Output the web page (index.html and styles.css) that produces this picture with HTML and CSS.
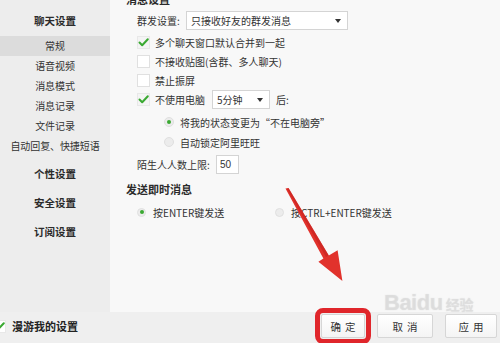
FILE: index.html
```html
<!DOCTYPE html>
<html lang="zh-CN">
<head>
<meta charset="utf-8">
<title>聊天设置</title>
<link rel="stylesheet" href="styles.css">
</head>
<body>
<div class="window">
  <div class="main-row">
    <nav class="sidebar">
      <div class="group-title">聊天设置</div>
      <ul class="items">
        <li class="item active">常规</li>
        <li class="item">语音视频</li>
        <li class="item">消息模式</li>
        <li class="item">消息记录</li>
        <li class="item">文件记录</li>
        <li class="item">自动回复、快捷短语</li>
      </ul>
      <div class="group-title">个性设置</div>
      <div class="group-title">安全设置</div>
      <div class="group-title">订阅设置</div>
    </nav>
    <section class="content">
      <h2 class="section-title cut">消息设置</h2>
      <div class="row field-row">
        <span class="label label-group">群发设置:</span>
        <div class="select select-wide"><span>只接收好友的群发消息</span><i class="caret"></i></div>
      </div>
      <div class="row check-row">
        <span class="checkbox checked"><svg viewBox="0 0 13 13"><path d="M2.5 6.5 L5.2 9.3 L10.8 3.2"/></svg></span>
        <span>多个聊天窗口默认合并到一起</span>
      </div>
      <div class="row check-row">
        <span class="checkbox"></span>
        <span>不接收贴图(含群、多人聊天)</span>
      </div>
      <div class="row check-row">
        <span class="checkbox"></span>
        <span>禁止振屏</span>
      </div>
      <div class="row check-row">
        <span class="checkbox checked"><svg viewBox="0 0 13 13"><path d="M2.5 6.5 L5.2 9.3 L10.8 3.2"/></svg></span>
        <span>不使用电脑</span>
        <div class="select select-small"><span>5分钟</span><i class="caret"></i></div>
        <span class="after">后:</span>
      </div>
      <div class="row radio-row sub">
        <span class="radio on"></span>
        <span>将我的状态变更为“不在电脑旁”</span>
      </div>
      <div class="row radio-row sub">
        <span class="radio"></span>
        <span>自动锁定阿里旺旺</span>
      </div>
      <div class="row field-row limit-row">
        <span class="label label-limit">陌生人人数上限:</span>
        <div class="input">50</div>
      </div>
      <h2 class="section-title send-title">发送即时消息</h2>
      <div class="row send-row">
        <div class="option first">
          <span class="radio small on"></span>
          <span>按ENTER键发送</span>
        </div>
        <div class="option">
          <span class="radio small"></span>
          <span>按CTRL+ENTER键发送</span>
        </div>
      </div>
    </section>
  </div>
  <footer class="footer">
    <div class="roam">
      <span class="checkbox checked"><svg viewBox="0 0 13 13"><path d="M2.5 6.5 L5.2 9.3 L10.8 3.2"/></svg></span>
      <span>漫游我的设置</span>
    </div>
    <div class="buttons">
      <button class="btn btn-ok highlight">确定</button>
      <button class="btn btn-cancel">取消</button>
      <button class="btn btn-apply">应用</button>
    </div>
  </footer>
  <div class="watermark"><span class="wm-latin">Baidu</span><span class="wm-cn">经验</span></div>
  <svg class="arrow" viewBox="0 0 500 343" width="500" height="343">
    <polygon points="285.5,188.5 288.5,188 328.8,255.4 337.6,250.2 342.4,281 318.4,261.8 323.4,258.6" fill="#e1322c"/>
    <polygon points="287,189 288.5,188 328.8,255.4 326,257" fill="#c5221f" opacity="0.6"/>
  </svg>
</div>
</body>
</html>
```
FILE: styles.css
```css
html, body {
  margin: 0;
  padding: 0;
}
body {
  width: 500px;
  height: 343px;
  overflow: hidden;
  font-family: "Noto Sans CJK SC", "Noto Sans", sans-serif;
  font-size: 10px;
  color: #333;
}
.window {
  position: relative;
  width: 500px;
  height: 343px;
  display: flex;
  flex-direction: column;
  background: #efefef;
  overflow: hidden;
}
.main-row {
  display: flex;
  height: 312px;
}
.sidebar {
  width: 110px;
  flex: none;
  background: #ededed;
  padding-top: 6px;
  box-sizing: border-box;
}
.group-title {
  line-height: 29px;
  text-align: center;
  font-weight: bold;
  font-size: 10.5px;
  color: #2b2b2b;
}
.items {
  list-style: none;
  margin: 1px 0 3px;
  padding: 0;
}
.item {
  height: 20px;
  line-height: 20px;
  text-align: center;
  white-space: nowrap;
  letter-spacing: -0.1px;
}
.item.active {
  background: #dcdcdc;
}
.content {
  flex: 1;
  background: #f8f8f8;
  padding-left: 16px;
  overflow: hidden;
}
.section-title {
  margin: 0;
  font-size: 11px;
  line-height: 16px;
  font-weight: bold;
  color: #2b2b2b;
}
.section-title.cut {
  margin-top: -9px;
}
.row {
  display: flex;
  align-items: center;
  padding-left: 11px;
  white-space: nowrap;
}
.field-row {
  margin-top: 4px;
  height: 18px;
}
.label-group {
  width: 49px;
}
.label-limit {
  width: 79px;
}
.select {
  position: relative;
  box-sizing: border-box;
  height: 19px;
  background: #fff;
  border: 1px solid #d4d4d4;
  display: flex;
  align-items: center;
  padding-left: 4px;
}
.select-wide {
  width: 162px;
}
.select-small {
  width: 58px;
  margin-left: 7px;
}
.caret {
  position: absolute;
  right: 6px;
  top: 7px;
  width: 0;
  height: 0;
  border-left: 3.5px solid transparent;
  border-right: 3.5px solid transparent;
  border-top: 4px solid #333;
}
.after {
  margin-left: 6px;
}
.check-row {
  height: 19px;
}
.field-row + .check-row {
  margin-top: 4px;
}
.checkbox {
  width: 13px;
  height: 13px;
  box-sizing: border-box;
  background: #fff;
  border: 1px solid #e0e0e0;
  margin-right: 5px;
  flex: none;
  display: flex;
}
.checkbox.checked {
  background: #f4f4f4;
  border-color: #e8e8e8;
}
.checkbox svg {
  width: 13px;
  height: 13px;
  margin: -1px;
}
.checkbox path {
  fill: none;
  stroke: #3aa932;
  stroke-width: 2;
  stroke-linecap: round;
  stroke-linejoin: round;
}
.radio-row {
  height: 20px;
}
.check-row + .radio-row {
  margin-top: 3px;
}
.radio-row.sub {
  padding-left: 38px;
}
.radio {
  width: 10px;
  height: 10px;
  box-sizing: border-box;
  border-radius: 50%;
  background: #ececec;
  border: 1px solid #e0e0e0;
  margin-right: 6px;
  flex: none;
  display: flex;
  align-items: center;
  justify-content: center;
}
.radio.on::after {
  content: "";
  width: 4px;
  height: 4px;
  border-radius: 50%;
  background: #3aa932;
}
.radio.small {
  width: 9px;
  height: 9px;
  margin-right: 7px;
}
.limit-row {
  margin-top: 3px;
  height: 19px;
}
.input {
  box-sizing: border-box;
  width: 23px;
  height: 19px;
  background: #fff;
  border: 1px solid #d4d4d4;
  padding-left: 3px;
  line-height: 17px;
  font-family: "Liberation Sans", sans-serif;
  font-size: 10px;
}
.send-title {
  margin-top: 6px;
  line-height: 18px;
}
.send-row {
  margin-top: 5px;
  height: 18px;
}
.option {
  display: flex;
  align-items: center;
}
.option.first {
  width: 138px;
}
.footer {
  height: 31px;
  flex: none;
  box-sizing: border-box;
  padding-top: 2px;
  padding-right: 3px;
  display: flex;
  justify-content: space-between;
  align-items: flex-start;
  background: #efefef;
}
.roam {
  display: flex;
  align-items: center;
  height: 24px;
  font-size: 11px;
  font-weight: bold;
  color: #222;
}
.roam .checkbox {
  margin-left: -7px;
  margin-right: 6px;
  background: #fff;
}
.buttons {
  display: flex;
  gap: 12px;
}
.btn {
  height: 24px;
  box-sizing: border-box;
  padding: 0;
  background: linear-gradient(#ffffff, #f4f4f4);
  border: 1px solid #d6d6d6;
  border-radius: 2px;
  font-family: "Noto Sans CJK SC", sans-serif;
  font-size: 10.5px;
  color: #333;
  letter-spacing: 4px;
  text-indent: 4px;
}
.btn-ok {
  width: 44px;
}
.btn-cancel {
  width: 56px;
}
.btn-apply {
  width: 52px;
}
.highlight {
  outline: 5px solid #e0262b;
  outline-offset: 1px;
}
.watermark {
  position: absolute;
  left: 384px;
  top: 290px;
  display: flex;
  align-items: baseline;
  color: rgba(222, 222, 222, 0.6);
  text-shadow: 0 0 1px rgba(190, 190, 190, 0.5);
  pointer-events: none;
}
.wm-latin {
  font-family: "Liberation Sans", sans-serif;
  font-size: 22px;
  font-weight: bold;
  letter-spacing: -0.5px;
}
.wm-cn {
  font-size: 14px;
  font-weight: bold;
  margin-left: 3px;
}
.arrow {
  position: absolute;
  left: 0;
  top: 0;
  pointer-events: none;
}
```
